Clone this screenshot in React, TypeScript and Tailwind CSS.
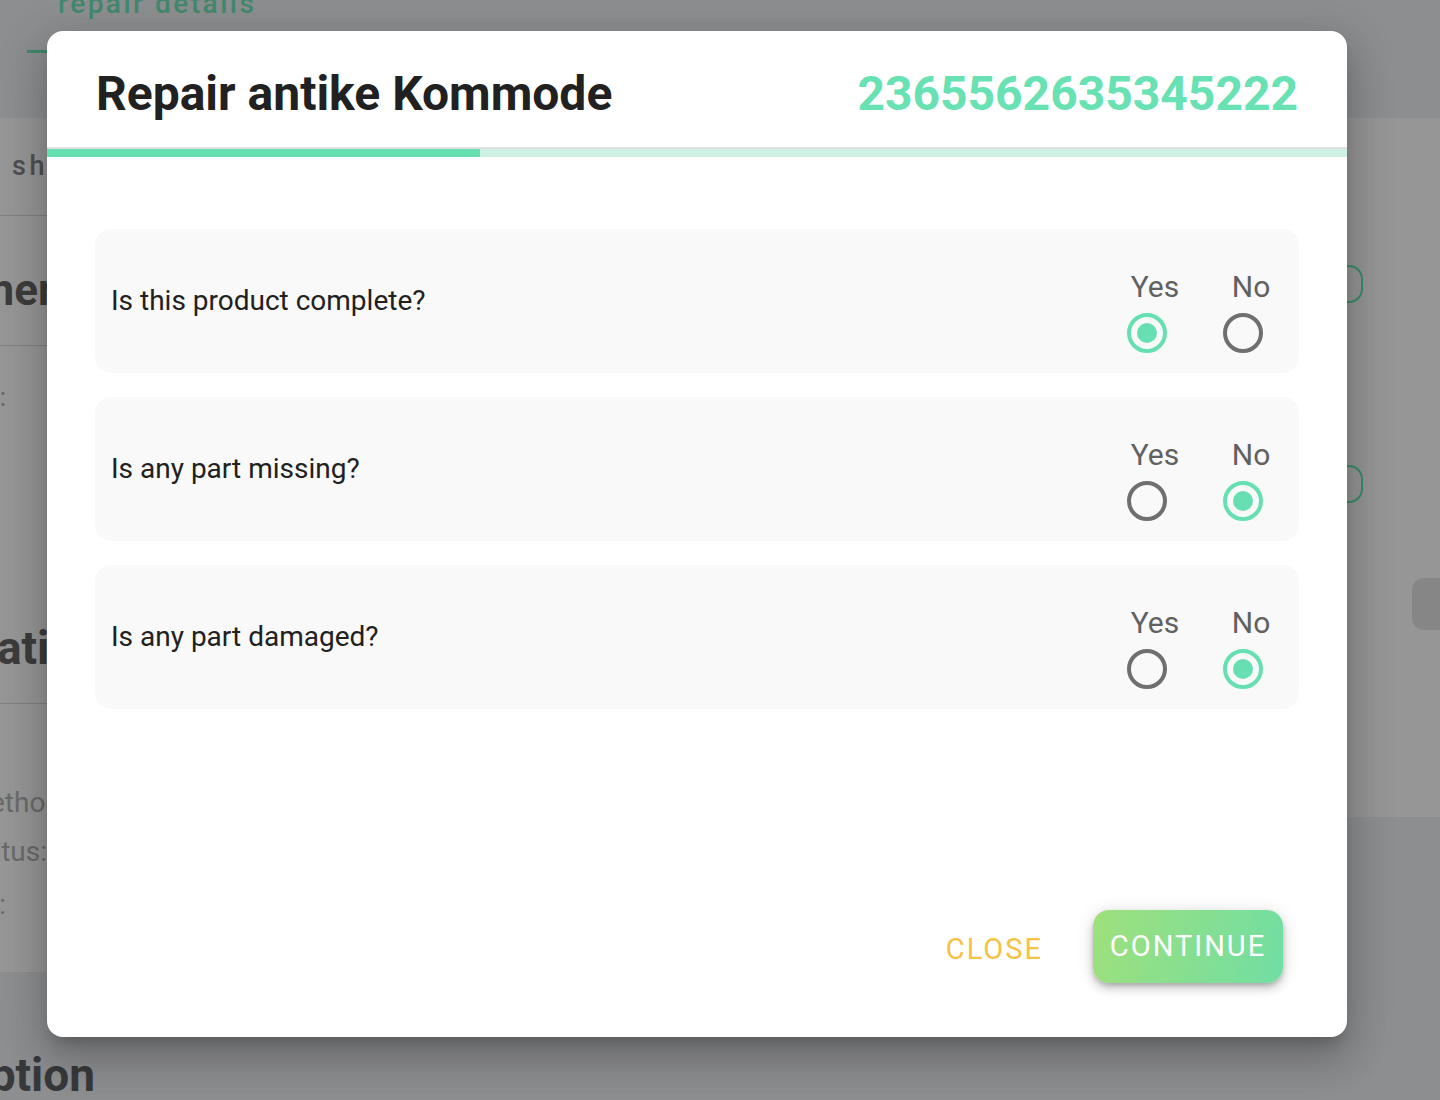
import React from "react";

const questions = [
  { q: "Is this product complete?", v: "yes" },
  { q: "Is any part missing?", v: "no" },
  { q: "Is any part damaged?", v: "no" },
];

function Radio({ checked }: { checked: boolean }) {
  return checked ? (
    <div className="flex h-[40px] w-[40px] items-center justify-center rounded-full border-[4px] border-[#66e0b2]">
      <div className="h-[20px] w-[20px] rounded-full bg-[#66e0b2]" />
    </div>
  ) : (
    <div className="h-[40px] w-[40px] rounded-full border-[4px] border-[#6f6f6f]" />
  );
}

function Option({ label, checked }: { label: string; checked: boolean }) {
  return (
    <div className="flex w-[96px] flex-col items-center">
      <span className="ml-[16px] text-[30px] leading-[30px] text-[#616161]">{label}</span>
      <div className="mt-[11px]">
        <Radio checked={checked} />
      </div>
    </div>
  );
}

function Cut({ w, className, children }: { w: string; className: string; children: React.ReactNode }) {
  return (
    <div className={`flex justify-end ${w}`}>
      <span className={`whitespace-nowrap ${className}`}>{children}</span>
    </div>
  );
}

export default function App() {
  return (
    <div className="relative h-[1100px] w-[1440px] overflow-hidden bg-[#f0f2f5] font-['Roboto','Liberation_Sans',sans-serif]">
      {/* underlying page */}
      <header className="flex h-[118px] flex-col">
        <div className="-mt-[16px] pl-[58px] text-[28px] font-medium leading-[40px] tracking-[2.5px] text-[#6fe9bb]">
          repair details
        </div>
        <div className="ml-[27px] mt-[26px] h-[3px] w-[260px] bg-[#6fe9bb]" />
      </header>
      <div className="flex">
        <section className="flex h-[854px] w-[700px] flex-col bg-white">
          <div className="flex h-[97px] items-center pl-[12px]">
            <span className="text-[27px] font-medium tracking-[3.5px] text-[#878787]">shipping</span>
          </div>
          <div className="h-px bg-[#dcdcdc]" />
          <div className="flex h-[129px] items-center pt-[19px]">
            <Cut w="w-[54px]" className="text-[44px] font-bold leading-[52px] text-[#666666]">
              Owner
            </Cut>
          </div>
          <div className="h-px bg-[#dcdcdc]" />
          <div className="flex h-[357px] flex-col">
            <div className="mt-[35px]">
              <Cut w="w-[6px]" className="text-[26px] leading-[32px] text-[#aaaaaa]">
                Name:
              </Cut>
            </div>
            <div className="mb-[27px] mt-auto">
              <Cut w="w-[101px]" className="text-[46px] font-bold leading-[56px] text-[#666666]">
                Information
              </Cut>
            </div>
          </div>
          <div className="h-px bg-[#dcdcdc]" />
          <div className="flex flex-col">
            <div className="mt-[81px]">
              <Cut w="w-[68px]" className="text-[28px] leading-[36px] text-[#b5b5b5]">
                Payment method:
              </Cut>
            </div>
            <div className="mt-[13px]">
              <Cut w="w-[47px]" className="text-[28px] leading-[36px] text-[#b5b5b5]">
                Status:
              </Cut>
            </div>
            <div className="mt-[17px]">
              <Cut w="w-[6px]" className="text-[28px] leading-[36px] text-[#b5b5b5]">
                Date:
              </Cut>
            </div>
          </div>
        </section>
        <section className="ml-auto flex h-[699px] w-[240px] flex-col items-start bg-white pl-[13px]">
          <div className="mt-[147px] h-[38px] w-[150px] rounded-[14px] border-2 border-[#62efb4]" />
          <div className="mt-[162px] h-[38px] w-[150px] rounded-[14px] border-2 border-[#62efb4]" />
          <div className="ml-[199px] mt-[75px] h-[52px] w-[60px] shrink-0 rounded-[12px] bg-[#e4e4e4]" />
        </section>
      </div>
      <div className="mt-[75px]">
        <Cut w="w-[95px]" className="text-[46px] font-bold leading-[56px] text-[#5e6165]">
          Description
        </Cut>
      </div>

      {/* overlay + dialog */}
      <div className="absolute inset-0 flex items-start justify-start bg-black/[0.41] pl-[47px] pt-[31px]">
        <div className="flex h-[1006px] w-[1300px] flex-col overflow-hidden rounded-[16px] bg-white shadow-[0_11px_15px_-7px_rgba(0,0,0,0.2),0_24px_38px_3px_rgba(0,0,0,0.14),0_9px_46px_8px_rgba(0,0,0,0.12)]">
          <div className="flex h-[116px] items-center justify-between px-[49px] pt-[10px]">
            <h1 className="text-[48px] font-bold leading-none text-[#212121]">Repair antike Kommode</h1>
            <span className="text-[48px] font-bold leading-none text-[#68e1b3]">2365562635345222</span>
          </div>
          <div className="h-[2px] bg-[#e0e0e0]" />
          <div className="flex h-[8px] bg-[#cdf1e3]">
            <div className="w-[433px] bg-[#66dfb1]" />
          </div>

          <div className="mx-[48px] mt-[72px] flex flex-col gap-[24px]">
            {questions.map((item) => (
              <div
                key={item.q}
                className="flex h-[144px] items-center justify-between rounded-[16px] bg-[#f9f9f9] pl-[16px] pr-[8px]"
              >
                <span className="text-[28px] leading-[28px] text-[#212121]">{item.q}</span>
                <div className="flex self-start pt-[43px]">
                  <Option label="Yes" checked={item.v === "yes"} />
                  <Option label="No" checked={item.v === "no"} />
                </div>
              </div>
            ))}
          </div>

          <div className="mt-auto flex items-center justify-end pb-[54px] pr-[64px]">
            <button className="mr-[50px] mt-[5px] text-[29px] font-normal leading-none tracking-[2px] text-[#f5c242]">
              CLOSE
            </button>
            <button className="flex h-[73px] w-[190px] items-center justify-center rounded-[16px] bg-[linear-gradient(105deg,#9fe07c,#70dea4)] text-[29px] font-normal leading-none tracking-[2px] text-white shadow-[0_3px_5px_-1px_rgba(0,0,0,0.2),0_6px_10px_0_rgba(0,0,0,0.14),0_1px_18px_0_rgba(0,0,0,0.12)]">
              CONTINUE
            </button>
          </div>
        </div>
      </div>
    </div>
  );
}
